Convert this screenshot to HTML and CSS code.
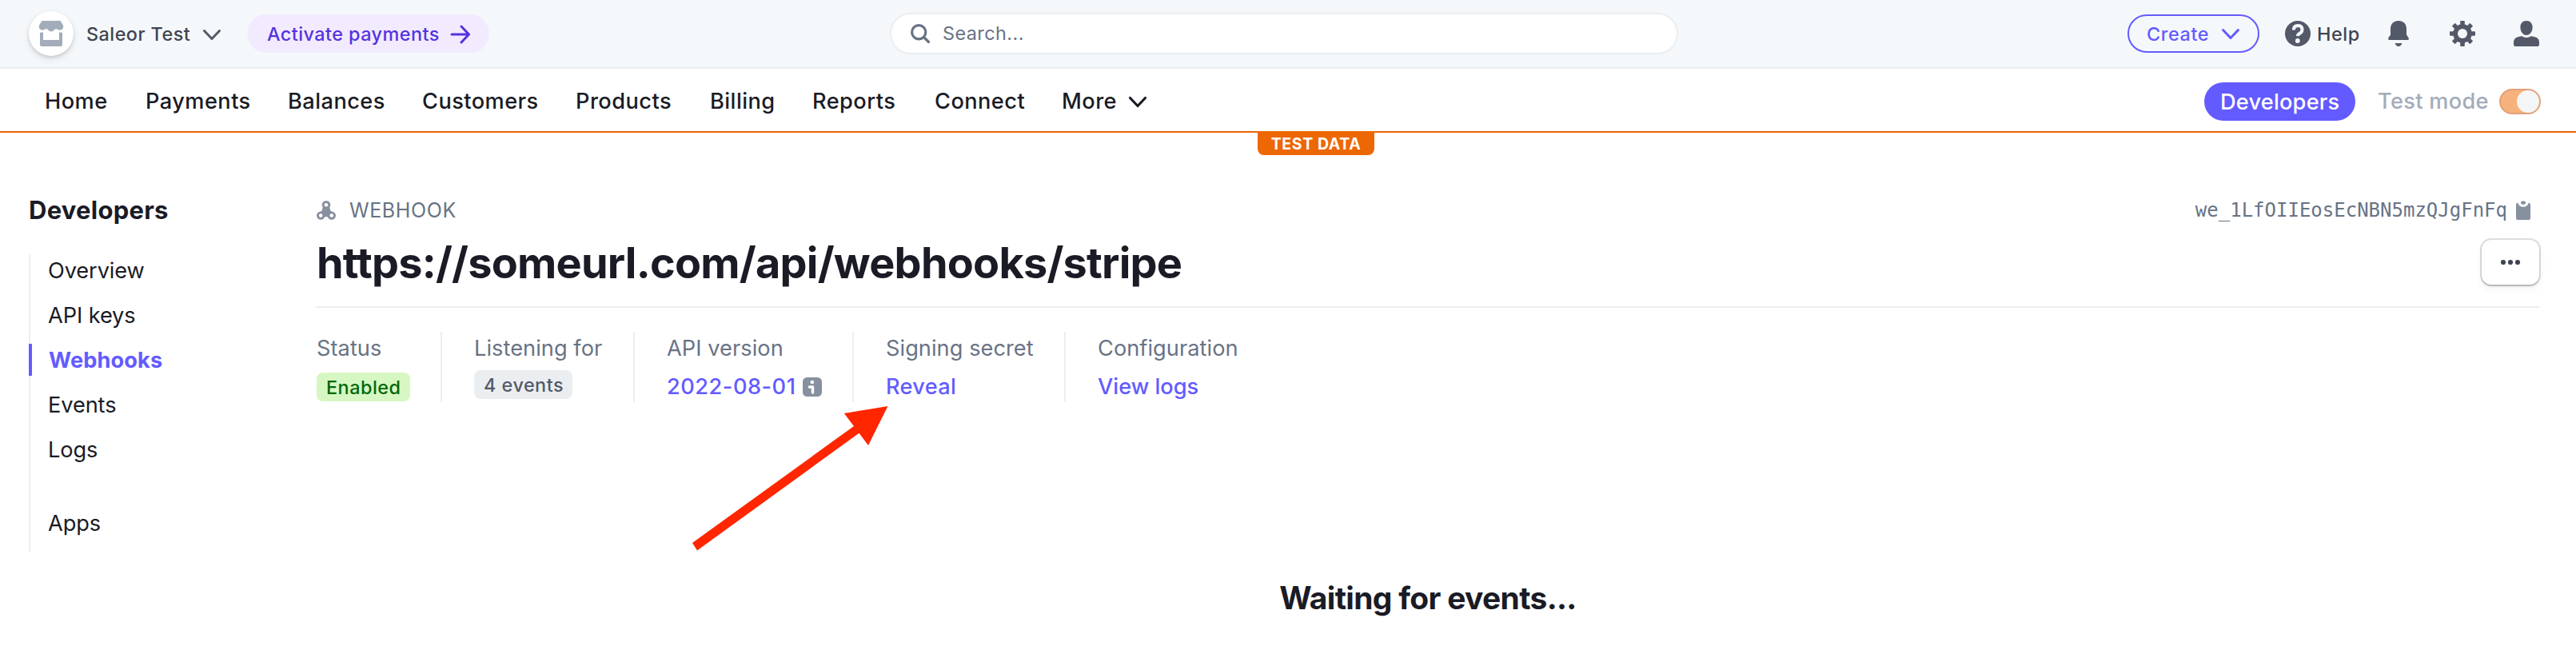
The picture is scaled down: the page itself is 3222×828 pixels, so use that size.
FILE: index.html
```
<!DOCTYPE html>
<html lang="en">
<head>
<meta charset="utf-8">
<title>Webhook - Developers</title>
<link rel="stylesheet" href="styles.css">
</head>
<body>
<header class="topbar">
  <div class="account">
    <span class="avatar">
      <svg width="32" height="32" viewBox="0 0 32 32" fill="#a3acba"><path d="M4.500 0h23l3.300 5.200q1.200 2.300 0 4.300a5 5 0 0 1-7.300 1q-1.800-1.200-3.300.600a5 5 0 0 1-8.400 0q-1.500-1.800-3.300-.600a5 5 0 0 1-7.300-1q-1.200-2 0-4.300z"/><path d="M2 14.500q2 .500 4-.300V24h20v-9.800q2 .800 4 .300V30a2 2 0 0 1-2 2H4a2 2 0 0 1-2-2z"/></svg>
    </span>
    <span class="account-name">Saleor Test</span>
    <svg class="account-chevron" width="24" height="16" viewBox="0 0 24 16" fill="none" stroke="#545969" stroke-width="3" stroke-linecap="round" stroke-linejoin="round"><path d="M2.500 2.500 12 12.500l9.500-10"/></svg>
  </div>
  <a class="activate">
    <span>Activate payments</span>
    <svg width="26" height="24" viewBox="0 0 26 24" fill="none" stroke="#5433df" stroke-width="3" stroke-linecap="round" stroke-linejoin="round"><path d="M2 12h21M14 2l9.500 10L14 22"/></svg>
  </a>
  <div class="search">
    <svg width="24" height="24" viewBox="0 0 24 24" fill="none" stroke="#687385" stroke-width="3.200" stroke-linecap="round"><circle cx="10.200" cy="10.200" r="8.600"/><path d="m16.500 16.500 6 6"/></svg>
    <span>Search...</span>
  </div>
  <div class="tools">
    <a class="create">
      <span>Create</span>
      <svg width="24" height="16" viewBox="0 0 24 16" fill="none" stroke="#635bff" stroke-width="3" stroke-linecap="round" stroke-linejoin="round"><path d="M2.500 2.500 12 12.500l9.500-10"/></svg>
    </a>
    <a class="help">
      <svg width="32" height="32" viewBox="0 0 32 32"><circle cx="16" cy="16" r="16" fill="#545969"/><path d="M10.800 11.500q.200-5.500 5.500-5.500 5.300.200 5.200 5 0 3.400-3.200 4.900-2.300 1-2.400 3.300" fill="none" stroke="#f5f8fa" stroke-width="4"/><circle cx="15.800" cy="25" r="2.900" fill="#f5f8fa"/></svg>
      <span>Help</span>
    </a>
    <svg class="tool-icon" width="32" height="32" viewBox="0 0 32 32" fill="#545969"><path d="M16 0c6.300 0 10 4.300 10 10v7.500l2.600 3.700q.9 2.800-1.300 2.800H4.700q-2.200 0-1.300-2.800L6 17.500V10C6 4.300 9.700 0 16 0zM11.500 28h9q-1.500 4-4.500 4t-4.500-4z"/></svg>
    <svg class="tool-icon" width="32" height="32" viewBox="-16 -16 32 32"><g fill="#545969"><circle r="11.800"/><rect x="-2.800" y="-16" width="5.600" height="32" rx="1"/><rect x="-2.800" y="-16" width="5.600" height="32" rx="1" transform="rotate(45)"/><rect x="-2.800" y="-16" width="5.600" height="32" rx="1" transform="rotate(90)"/><rect x="-2.800" y="-16" width="5.600" height="32" rx="1" transform="rotate(135)"/></g><circle r="6" fill="#f5f8fa"/></svg>
    <svg class="tool-icon" width="32" height="32" viewBox="0 0 32 32" fill="#545969"><path d="M16 0c4.800 0 7.600 3.300 7.600 8.200 0 5.200-3.200 9.800-7.600 9.800s-7.600-4.600-7.600-9.800C8.400 3.300 11.200 0 16 0zM0 27q0-5 4.500-6.500l4.800-1.200q1.200-.200 2 .4Q16 22.500 20.700 19.700q.8-.6 2-.4l4.800 1.200Q32 22 32 27v3a2 2 0 0 1-2 2H2a2 2 0 0 1-2-2z"/></svg>
  </div>
</header>
<nav class="mainnav">
  <div class="links">
    <a>Home</a><a>Payments</a><a>Balances</a><a>Customers</a><a>Products</a><a>Billing</a><a>Reports</a><a>Connect</a>
    <a class="more">More <svg width="24" height="16" viewBox="0 0 24 16" fill="none" stroke="#1a1b25" stroke-width="3.200" stroke-linecap="round" stroke-linejoin="round"><path d="M2.500 2.500 12 12.500l9.500-10"/></svg></a>
  </div>
  <div class="mode">
    <a class="dev-pill">Developers</a>
    <span class="mode-label">Test mode</span>
    <span class="toggle"><span class="knob"></span></span>
  </div>
  <span class="test-data">TEST DATA</span>
</nav>
<div class="page">
  <aside class="sidebar">
    <h2>Developers</h2>
    <ul>
      <li><span>Overview</span></li>
      <li><span>API keys</span></li>
      <li class="current"><span>Webhooks</span></li>
      <li><span>Events</span></li>
      <li><span>Logs</span></li>
      <li class="apps"><span>Apps</span></li>
    </ul>
  </aside>
  <main class="content">
    <div class="eyebrow">
      <span class="kind">
        <svg width="24" height="24" viewBox="0 0 24 24"><g fill="#87909f"><path d="M8 7h8l1.200 5 3.300 4-2 6-5-1.800h-3L5.500 22l-2-6 3.300-4z"/><circle cx="12" cy="5.200" r="5.200"/><circle cx="5.200" cy="18.600" r="5.200"/><circle cx="18.800" cy="18.600" r="5.200"/></g><g fill="#fff"><circle cx="12" cy="5.200" r="2.300"/><circle cx="5.200" cy="18.600" r="2.300"/><circle cx="18.800" cy="18.600" r="2.300"/></g></svg>
        <span>WEBHOOK</span>
      </span>
      <span class="ident">
        <span>we_1LfOIIEosEcNBN5mzQJgFnFq</span>
        <svg width="18" height="24" viewBox="0 0 18 24" fill="#87909f"><path d="M0 5q0-2 2.300-2.600Q3.500 7.800 9 7.800t6.700-5.400Q18 3 18 5v17a2 2 0 0 1-2 2H2a2 2 0 0 1-2-2z"/><rect x="6" y=".5" width="6" height="4.300" rx="2.100"/></svg>
      </span>
    </div>
    <div class="title-row">
      <h1>https://someurl.com/api/webhooks/stripe</h1>
      <button class="overflow" aria-label="More actions"><svg width="26" height="8" viewBox="0 0 26 8" fill="#414552"><circle cx="4" cy="4" r="3.100"/><circle cx="13" cy="4" r="3.100"/><circle cx="22" cy="4" r="3.100"/></svg></button>
    </div>
    <dl class="stats">
      <div><dt>Status</dt><dd><span class="badge ok">Enabled</span></dd></div>
      <div><dt>Listening for</dt><dd class="raised"><span class="badge muted">4 events</span></dd></div>
      <div><dt>API version</dt><dd><a class="version">2022-08-01</a><svg width="24" height="24" viewBox="0 0 24 24"><rect width="24" height="24" rx="5.500" fill="#87909f"/><circle cx="11.800" cy="6" r="2.300" fill="#fff"/><path d="M8.500 12h4v7" fill="none" stroke="#fff" stroke-width="3.400" stroke-linecap="round" stroke-linejoin="round"/></svg></dd></div>
      <div><dt>Signing secret</dt><dd><a class="reveal">Reveal</a></dd></div>
      <div><dt>Configuration</dt><dd><a>View logs</a></dd></div>
    </dl>
    <p class="waiting">Waiting for events...</p>
  </main>
</div>
<svg class="pointer" width="248" height="182" viewBox="865 507 248 182"><path d="M1110.500 508 1086 557l-11.500-15.300L872 688.500 866 679l202-146-12.200-16z" fill="#ff2600"/></svg>
</body>
</html>
```
FILE: styles.css
```
* { box-sizing: border-box; margin: 0; padding: 0; }
body {
  width: 3222px; height: 828px; overflow: hidden; position: relative;
  background: #fff; color: #1a1b25;
  font: 460 27.200px/40px Inter, "Liberation Sans", sans-serif;
  white-space: nowrap;
}
svg { display: block; flex: none; }

.topbar {
  height: 86px; display: flex; align-items: center;
  padding: 0 46px 0 36px;
  background: #f5f8fa; border-bottom: 2px solid #ebeef1;
  font-size: 23.400px; letter-spacing: .45px; color: #414552;
}
.account { display: flex; align-items: center; width: 273px; }
.avatar {
  width: 56px; height: 56px; border-radius: 50%; background: #fff;
  display: grid; place-items: center; margin-right: 16px;
  box-shadow: 0 2px 4px rgba(0,0,0,.14), 0 4px 10px rgba(60,66,87,.1);
}
.account-name { width: 145px; padding-top: 2px; }
.account-chevron { margin-top: 4px; }
.activate {
  width: 303px; height: 48px; border-radius: 24px; background: #f2ebff; color: #5433df;
  display: flex; align-items: center; justify-content: space-between;
  padding: 1px 23px 0 25px;
}
.search {
  width: 986px; height: 52px; margin-left: 501px; border: 2px solid #ebeef1; border-radius: 26px;
  background: #fff; color: #687385; font-weight: 400;
  display: flex; align-items: center; gap: 16px; padding: 0 24px;
}
.tools { display: flex; align-items: center; margin-left: auto; }
.create {
  width: 165px; height: 48px; border: 2px solid #635bff; border-radius: 24px; color: #635bff;
  display: flex; align-items: center; justify-content: space-between;
  padding: 1px 22px 0 22px; letter-spacing: .6px;
}
.help { display: flex; align-items: center; gap: 8px; width: 94px; margin: 0 32px; letter-spacing: .6px; }
.help span { padding-top: 1px; }
.tool-icon + .tool-icon { margin-left: 48px; }

.mainnav {
  height: 80px; display: flex; align-items: center; justify-content: space-between;
  padding: 3px 44px 0 56px; border-bottom: 2px solid #ed6704; position: relative;
}
.links { display: grid; grid-template-columns: 126px 178px 168px 192px 168px 128px 153px 159px auto; letter-spacing: .45px; }
.more { display: flex; align-items: center; gap: 14px; }
.more svg { margin-top: 3px; }
.mode { display: flex; align-items: center; }
.dev-pill { width: 189px; height: 48px; line-height: 49px; border-radius: 24px; background: #635bff; color: #fff; padding-left: 20px; letter-spacing: .2px; }
.mode-label { width: 152px; margin-left: 28px; color: #a3acba; letter-spacing: .3px; }
.toggle { width: 52px; height: 32px; border-radius: 16px; border: 2px solid #e39f7a; background: #f6b27d; display: flex; justify-content: flex-end; }
.knob { width: 28px; height: 28px; border-radius: 50%; background: #f4f5f7; }
.test-data {
  position: absolute; left: 1573px; top: 78px; width: 146px; height: 30px;
  border-radius: 0 0 8px 8px; background: #ed6704; color: #fff;
  font-size: 19.500px; font-weight: 700; line-height: 32px; letter-spacing: .6px; text-align: center;
}

.page { display: flex; padding: 77px 46px 0 36px; }
.sidebar { width: 360px; }
.sidebar h2 { font-size: 31px; font-weight: 700; line-height: 40px; letter-spacing: .25px; }
.sidebar ul {
  list-style: none; margin-top: 35px; height: 372px; border-left: 2px solid #ebeef1;
  display: flex; flex-direction: column; gap: 16px; font-weight: 400; letter-spacing: -.1px;
}
.sidebar li { height: 40px; line-height: 42px; padding-left: 22px; }
.sidebar .current { margin-left: -2px; padding-left: 21px; border-left: 4px solid #635bff; color: #635bff; font-weight: 700; letter-spacing: .1px; }
.sidebar .apps { margin-top: 36px; }

.content { flex: 1; }
.eyebrow { display: flex; justify-content: space-between; align-items: center; height: 40px; color: #687385; }
.kind { display: flex; align-items: center; gap: 17px; font-size: 25px; font-weight: 400; letter-spacing: .6px; }
.ident { display: flex; align-items: center; gap: 11px; padding-right: 12px; margin-right: -1px; font: 400 24px/40px "DejaVu Sans Mono", monospace; }
.title-row { height: 102px; display: flex; justify-content: space-between; padding-top: 15px; border-bottom: 2px solid #ebeef1; }
.title-row h1 { font-size: 54px; line-height: 62px; font-weight: 700; letter-spacing: -.78px; }
.overflow {
  width: 72px; height: 56px; margin-top: 2px; border: 0; border-radius: 12px; background: #fff;
  display: grid; place-items: center;
  box-shadow: 0 0 0 2px rgba(60,60,67,.16), 0 2px 2px rgba(0,0,0,.16), 0 4px 10px rgba(60,66,87,.08);
}
.stats {
  display: grid; grid-template-columns: 155px 241px 274px 265px auto;
  margin-top: 30px; height: 88px;
}
.stats div + div { border-left: 2px solid #ebeef1; padding-left: 40px; }
.stats dt { height: 40px; line-height: 42px; color: #687385; font-weight: 400; letter-spacing: .05px; }
.stats dd { display: flex; align-items: center; height: 36px; margin-top: 11px; gap: 9px; color: #635bff; }
.stats .raised { margin-top: 8px; }
.version { letter-spacing: .5px; }
.reveal { letter-spacing: .3px; }
.badge { height: 36px; line-height: 37px; border-radius: 8px; font-size: 23.400px; letter-spacing: .5px; }
.ok { width: 117px; padding-left: 12px; background: #d7f7c2; color: #006908; font-weight: 500; }
.muted { width: 123px; padding-left: 12px; background: #ebeef1; color: #545969; }
.waiting { margin-top: 225px; text-align: center; font-size: 39px; font-weight: 700; letter-spacing: -.69px; }

/* Annotation arrow over the page */
.pointer { position: absolute; left: 865px; top: 507px; }
```
